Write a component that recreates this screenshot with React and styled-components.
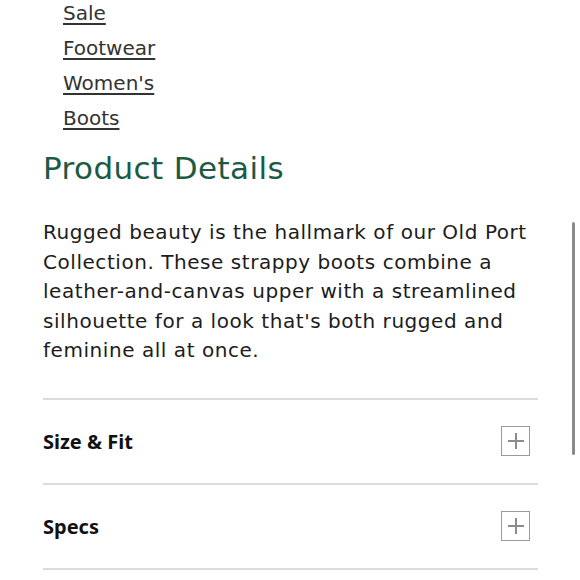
import React from 'react';
import styled, { createGlobalStyle } from 'styled-components';

const GlobalStyle = createGlobalStyle`
  html, body {
    margin: 0;
    padding: 0;
    background: #fff;
    overflow: hidden;
  }
  body {
    font-family: "DejaVu Sans", "Noto Sans", sans-serif;
    color: #1f1f1f;
  }
`;

const Page = styled.div`
  width: 495px;
  padding: 0 0 0 43px;
`;

const Crumbs = styled.ul`
  list-style: none;
  margin: -4px 0 0 20px;
  padding: 0;
`;

const Crumb = styled.li`
  line-height: 35px;
  font-size: 20px;

  a {
    color: #333;
    text-decoration: underline;
    text-underline-offset: 3px;
    text-decoration-thickness: 1.5px;
  }
`;

const Heading = styled.h2`
  margin: 12px 0 0;
  font-size: 31px;
  font-weight: 500;
  letter-spacing: 0.4px;
  color: #1b5a43;
  line-height: 40px;
`;

const Description = styled.p`
  margin: 30px 0 0;
  font-size: 20px;
  letter-spacing: 0.55px;
  line-height: 29.5px;
  color: #1c1c1c;
`;

const Accordion = styled.div`
  margin-top: 32px;
  border-top: 2px solid #dcdcdc;
`;

const Row = styled.div`
  display: flex;
  align-items: center;
  justify-content: space-between;
  height: 83px;
  border-bottom: 2px solid #dcdcdc;
`;

const RowTitle = styled.span`
  font-family: "Noto Sans", "DejaVu Sans", sans-serif;
  font-size: 20px;
  font-weight: 700;
  color: #111;
`;

const PlusBox = styled.span`
  display: flex;
  align-items: center;
  justify-content: center;
  width: 27px;
  height: 28px;
  margin-right: 8px;
  border: 1.5px solid #9a9a9a;
`;

const Scrollbar = styled.div`
  position: fixed;
  top: 222px;
  right: 5px;
  width: 3px;
  height: 233px;
  border-radius: 2px;
  background: #8a8a8a;
`;

const Plus = () => (
  <PlusBox>
    <svg width="18" height="18" viewBox="0 0 18 18">
      <path d="M9 1v16M1 9h16" stroke="#8c8c8c" strokeWidth="2" fill="none" />
    </svg>
  </PlusBox>
);

const crumbs = ["Sale", "Footwear", "Women's", "Boots"];
const sections = ["Size & Fit", "Specs"];

export default function App() {
  return (
    <>
      <GlobalStyle />
      <Page>
        <Crumbs>
          {crumbs.map((c) => (
            <Crumb key={c}><a href="#">{c}</a></Crumb>
          ))}
        </Crumbs>
        <Heading>Product Details</Heading>
        <Description>
          Rugged beauty is the hallmark of our Old Port Collection. These strappy boots
          combine a leather-and-canvas upper with a streamlined silhouette for a look
          that's both rugged and feminine all at once.
        </Description>
        <Accordion>
          {sections.map((s) => (
            <Row key={s}>
              <RowTitle>{s}</RowTitle>
              <Plus />
            </Row>
          ))}
        </Accordion>
      </Page>
      <Scrollbar />
    </>
  );
}
